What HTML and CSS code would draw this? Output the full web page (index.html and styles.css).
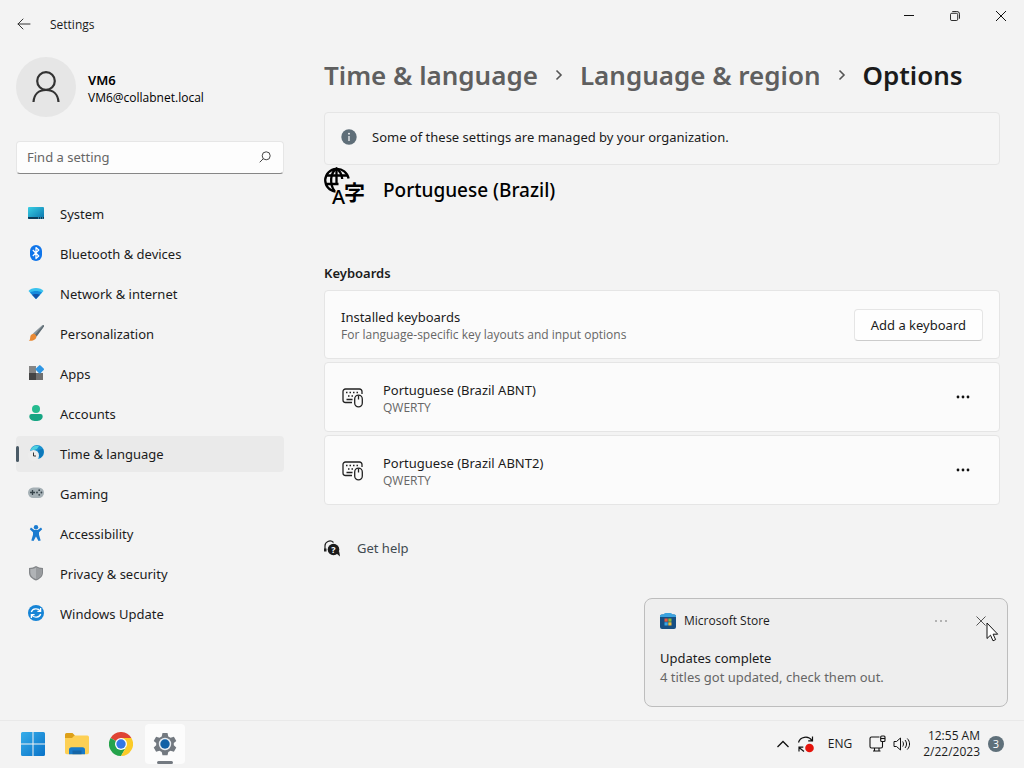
FILE: index.html
```
<!DOCTYPE html>
<html lang="en">
<head>
  <meta charset="UTF-8">
  <title>Settings</title>
  <link rel="stylesheet" href="styles.css">
</head>
<body>
  <header class="titlebar">
    <button class="back" aria-label="Back">
      <svg width="14" height="12" viewBox="0 0 14 12" fill="none" stroke="#333" stroke-linecap="round" stroke-linejoin="round"><path d="M13 6H1M6 1L1 6l5 5"/></svg>
    </button>
    <span class="title">Settings</span>
    <div class="window-buttons">
      <button aria-label="Minimize"><svg width="10" height="10" stroke="#111"><path d="M0 4.500h10"/></svg></button>
      <button aria-label="Restore"><svg width="10" height="10" viewBox="0 0 11 11" fill="none" stroke="#111"><rect x=".5" y="2.500" width="8" height="8" rx="1.500"/><path d="M2.500 .5h5a3 3 0 0 1 3 3v5"/></svg></button>
      <button aria-label="Close"><svg width="10" height="10" stroke="#111"><path d="M0 0l10 10M10 0L0 10"/></svg></button>
    </div>
  </header>

  <div class="layout">
    <aside class="sidebar">
      <div class="account">
        <div class="avatar">
          <svg width="28" height="32" viewBox="0 0 28 32" fill="none" stroke="#333" stroke-width="2.200"><circle cx="14" cy="10" r="8.800"/><path d="M1.500 31C2 23 7 19 14 19s12 4 12.500 12"/></svg>
        </div>
        <div class="account-text">
          <div class="account-name">VM6</div>
          <div class="account-mail">VM6@collabnet.local</div>
        </div>
      </div>

      <div class="search">
        <input type="text" placeholder="Find a setting" aria-label="Find a setting">
        <svg width="12" height="12" viewBox="0 0 12 12" fill="none" stroke="#444"><circle cx="7.200" cy="4.800" r="4"/><path d="M4.300 7.700L.7 11.300"/></svg>
      </div>

      <nav class="nav">
        <a href="#">
          <svg width="16" height="16" viewBox="0 0 16 16"><defs><linearGradient id="sys" x2="1" y2="1"><stop stop-color="#38cfe4"/><stop offset="1" stop-color="#0a72ac"/></linearGradient></defs><rect y="2" width="16" height="12" rx="1" fill="url(#sys)"/><path d="M0 12h16v1a1 1 0 0 1-1 1H1a1 1 0 0 1-1-1z" fill="#0b3b5a"/><path d="M10 13h1M12 13h1M14 13h1" stroke="#5fc6e6"/></svg>
          System
        </a>
        <a href="#">
          <svg width="16" height="16" viewBox="0 0 16 16"><rect x="2" width="12" height="16" rx="6" fill="#0f75ea"/><path d="M4.800 5l6 6L8 13.500v-11L10.800 5l-6 6" fill="none" stroke="#fff" stroke-width="1.200" stroke-linejoin="round"/></svg>
          Bluetooth &amp; devices
        </a>
        <a href="#">
          <svg width="16" height="16" viewBox="0 0 16 16"><path d="M.5 6C3 2 13 2 15.500 6L8 14z" fill="#39c2ee"/><path d="M2 7.500C5.500 5.500 10.500 5.500 14 7.500L8 14z" fill="#168bdc"/><path d="M4 9.800C6 8.600 10 8.600 12 9.800L8 14z" fill="#1353a8"/></svg>
          Network &amp; internet
        </a>
        <a href="#">
          <svg width="16" height="16" viewBox="0 0 16 16"><path d="M5 8.500L14.500 0c1-.3 1.700.5 1.400 1.400L8.500 11.500z" fill="#8a959c"/><path d="M8.500 11.500L15.900 1.400c.2-.7 0-1.100-.4-1.300L6.800 10z" fill="#5f6c74"/><path d="M4.500 9c2-1 4.500 1.200 3.800 3.400C7.500 15.200 4 16 .8 15.700c1.500-1 1.200-2 1.500-4C2.500 10.500 3.300 9.600 4.500 9z" fill="#e98a35"/></svg>
          Personalization
        </a>
        <a href="#">
          <svg width="16" height="16" viewBox="0 0 16 16"><rect x="1" y="1" width="7" height="7" fill="#858585"/><rect x="1" y="8" width="7" height="7" fill="#444"/><rect x="8" y="8" width="7" height="7" fill="#707070"/><rect x="8.600" y="1" width="6.500" height="6.500" rx="1" fill="#2e96e4" transform="rotate(45 11.800 4.200)"/></svg>
          Apps
        </a>
        <a href="#">
          <svg width="16" height="16" viewBox="0 0 16 16"><circle cx="8" cy="4" r="4" fill="#25bb8f"/><path d="M3.500 9h9A2.200 2.200 0 0 1 14.700 11.200C14.700 14.500 11.500 16 8 16s-6.700-1.500-6.700-4.800A2.200 2.200 0 0 1 3.500 9z" fill="#16a583"/></svg>
          Accounts
        </a>
        <a href="#" class="active" aria-current="page">
          <svg width="16" height="16" viewBox="0 0 16 16"><circle cx="9" cy="7" r="7" fill="#1991cf"/><path d="M2.500 5C4 1 8 0 11 1L9 4 6 5z" fill="#4fd0df"/><path d="M10 5l5-1c1.500 3 0 7-3 9.200L10 9z" fill="#0d78ba"/><circle cx="5.500" cy="10.500" r="5.500" fill="#ececec"/><path d="M5.500 7.500V11H8" fill="none" stroke="#333"/></svg>
          Time &amp; language
        </a>
        <a href="#">
          <svg width="16" height="16" viewBox="0 0 16 16"><rect y="2.500" width="16" height="10.500" rx="5.200" fill="#a5b0b5"/><path d="M2 7.500h5M4.500 5v5" stroke="#36434a" stroke-width="1.300"/><g fill="#36434a"><circle cx="9" cy="7.500" r=".9"/><circle cx="11.200" cy="5.200" r=".9"/><circle cx="11.200" cy="9.800" r=".9"/><circle cx="13.400" cy="7.500" r=".9"/></g></svg>
          Gaming
        </a>
        <a href="#">
          <svg width="16" height="16" viewBox="0 0 16 16" fill="#1a7bd0"><circle cx="8" cy="2.200" r="2.200"/><path d="M3 2.600L6.300 5h3.400L13 2.600l1.200 1.600L11 7.200v2.600l1.700 5.600-2.200.6L8 11.500 5.500 16l-2.200-.6L5 9.800V7.200L1.800 4.200z"/></svg>
          Accessibility
        </a>
        <a href="#">
          <svg width="16" height="16" viewBox="0 0 16 16"><path d="M8 1c2 1.300 4.300 2 7 2v4.500c0 4-3 6.500-7 8-4-1.500-7-4-7-8V3c2.700 0 5-.7 7-2z" fill="#838689"/><path d="M8 2.500c1.700 1 3.600 1.500 5.700 1.600v3.400c0 3.200-2.400 5.300-5.700 6.600-3.300-1.300-5.700-3.400-5.700-6.600V4.100C4.400 4 6.300 3.500 8 2.500z" fill="#b0b3b6"/><path d="M8 2.500c1.700 1 3.600 1.500 5.700 1.600v3.400c0 3.200-2.400 5.300-5.700 6.600z" fill="#989b9e"/></svg>
          Privacy &amp; security
        </a>
        <a href="#">
          <svg width="16" height="16" viewBox="0 0 16 16"><circle cx="8" cy="8" r="8" fill="#1684d6"/><path d="M3.300 7C4.500 3.300 10 2.700 12.300 6M12.700 9c-1.200 3.700-6.700 4.300-9 1M12.600 3v3.300H9.400M3.400 13V9.700h3.200" fill="none" stroke="#fff" stroke-width="1.300"/></svg>
          Windows Update
        </a>
      </nav>
    </aside>

    <main class="content">
      <h1 class="breadcrumb">
        <a href="#">Time &amp; language</a>
        <svg width="8" height="12" viewBox="0 0 8 12" fill="none" stroke="#555" stroke-width="1.600"><path d="M1.500 1.500L6 6l-4.500 4.500"/></svg>
        <a href="#">Language &amp; region</a>
        <svg width="8" height="12" viewBox="0 0 8 12" fill="none" stroke="#555" stroke-width="1.600"><path d="M1.500 1.500L6 6l-4.500 4.500"/></svg>
        <span>Options</span>
      </h1>

      <div class="banner">
        <svg width="16" height="16" viewBox="0 0 16 16"><circle cx="8" cy="8" r="7.700" fill="#5f6e78"/><path d="M8 7v5" stroke="#fff" stroke-width="1.200"/><circle cx="8" cy="4.700" r=".9" fill="#fff"/></svg>
        Some of these settings are managed by your organization.
      </div>

      <div class="language">
        <svg width="42" height="45" viewBox="0 -2 42 45">
          <g fill="none" stroke="#000" stroke-width="2.300"><path d="M11.500 24.500C5.500 24 1.200 19 1.200 13A11.800 11.800 0 0 1 24.600 11.500"/><path d="M10.500 24C5.500 17 6 6 12.500 1.500 16 4 18 7.500 18.200 12"/><path d="M2.500 8.500h21M2 17h12.500M12.500 1.500V17"/></g>
          <text class="glyph-latin" x="8" y="37">A</text>
          <text class="glyph-cjk" x="20" y="33">字</text>
        </svg>
        <h2>Portuguese (Brazil)</h2>
      </div>

      <section>
        <h3>Keyboards</h3>
        <div class="cards">
          <div class="card">
            <div class="card-text">
              <div class="card-title">Installed keyboards</div>
              <div class="card-note">For language-specific key layouts and input options</div>
            </div>
            <button class="add">Add a keyboard</button>
          </div>
          <div class="card">
            <svg class="card-icon" width="22" height="20" viewBox="0 0 22 20" fill="none" stroke="#222" stroke-width="1.300"><path d="M10 14.500H3.500A2.500 2.500 0 0 1 1 12V3.500A2.500 2.500 0 0 1 3.500 1h14A2.500 2.500 0 0 1 20 3.500V6"/><path d="M4 4.500h1.500M7.500 4.500H9M11 4.500h1.500M14.500 4.500H16M6 8h1.500M9.500 8H11M4.500 11.500h6"/><rect x="12.700" y="7.200" width="7.600" height="11.600" rx="3.800"/><path d="M16.500 7.500v4"/></svg>
            <div class="card-text">
              <div class="card-title">Portuguese (Brazil ABNT)</div>
              <div class="card-note">QWERTY</div>
            </div>
            <button class="more" aria-label="More options"><svg width="14" height="4" fill="#111"><circle cx="2" cy="2" r="1.400"/><circle cx="7" cy="2" r="1.400"/><circle cx="12" cy="2" r="1.400"/></svg></button>
          </div>
          <div class="card">
            <svg class="card-icon" width="22" height="20" viewBox="0 0 22 20" fill="none" stroke="#222" stroke-width="1.300"><path d="M10 14.500H3.500A2.500 2.500 0 0 1 1 12V3.500A2.500 2.500 0 0 1 3.500 1h14A2.500 2.500 0 0 1 20 3.500V6"/><path d="M4 4.500h1.500M7.500 4.500H9M11 4.500h1.500M14.500 4.500H16M6 8h1.500M9.500 8H11M4.500 11.500h6"/><rect x="12.700" y="7.200" width="7.600" height="11.600" rx="3.800"/><path d="M16.500 7.500v4"/></svg>
            <div class="card-text">
              <div class="card-title">Portuguese (Brazil ABNT2)</div>
              <div class="card-note">QWERTY</div>
            </div>
            <button class="more" aria-label="More options"><svg width="14" height="4" fill="#111"><circle cx="2" cy="2" r="1.400"/><circle cx="7" cy="2" r="1.400"/><circle cx="12" cy="2" r="1.400"/></svg></button>
          </div>
        </div>
      </section>

      <a href="#" class="help">
        <svg width="17" height="17" viewBox="0 0 17 17"><path d="M1 10.500V6.500A5 5 0 0 1 9.500 2.500" fill="none" stroke="#222" stroke-width="1.200"/><path d="M0 8.500h2.500v3H0z" fill="#222"/><circle cx="9.500" cy="9.500" r="5.800" fill="#1b1b1b"/><path d="M12 13l4 3.500-.8-5z" fill="#1b1b1b"/><text class="question" x="9.500" y="13">?</text></svg>
        Get help
      </a>
    </main>
  </div>

  <div class="toast" role="status">
    <div class="toast-head">
      <svg width="16" height="16" viewBox="0 0 16 16"><rect y="1.500" width="16" height="14.500" rx="2" fill="#164e82"/><path d="M3.500 1.500Q4 0 5.500 0h5Q12 0 12.500 1.500h2A1.500 1.500 0 0 1 16 3v1H0V3a1.500 1.500 0 0 1 1.500-1.500z" fill="#3ba3df"/><path d="M4.500 5.500h3.200v3.200H4.500z" fill="#e9583c"/><path d="M8.300 5.500h3.200v3.200H8.300z" fill="#8abb3b"/><path d="M4.500 9.300h3.200v3.200H4.500z" fill="#3aa5e3"/><path d="M8.300 9.300h3.200v3.200H8.300z" fill="#efbd39"/></svg>
      <span class="toast-app">Microsoft Store</span>
      <button aria-label="Notification settings"><svg width="12" height="4" fill="#666"><circle cx="1" cy="2" r=".8"/><circle cx="6" cy="2" r=".8"/><circle cx="11" cy="2" r=".8"/></svg></button>
      <button aria-label="Dismiss"><svg width="10" height="10" stroke="#555"><path d="M.5 .5l9 9M9.500 .5l-9 9"/></svg></button>
    </div>
    <div class="toast-title">Updates complete</div>
    <div class="toast-text">4 titles got updated, check them out.</div>
    <svg class="cursor" width="13" height="20" viewBox="0 0 13 20"><path d="M1 1v15.500l3.500-3.300 2.500 5.600 2.600-1.200-2.500-5.400h4.600z" fill="#fff" stroke="#111"/></svg>
  </div>

  <footer class="taskbar">
    <div class="apps">
      <button aria-label="Start">
        <svg width="24" height="24" viewBox="0 0 24 24"><defs><linearGradient id="win" x2="1" y2="1"><stop stop-color="#38aeea"/><stop offset="1" stop-color="#0872c8"/></linearGradient></defs><path d="M0 1.500A1.500 1.500 0 0 1 1.500 0H11.500v11.500H0zM12.500 0h10A1.500 1.500 0 0 1 24 1.500v10H12.500zM0 12.500h11.500V24h-10A1.500 1.500 0 0 1 0 22.500zM12.500 12.500H24v10a1.500 1.500 0 0 1-1.500 1.500h-10z" fill="url(#win)"/></svg>
      </button>
      <button aria-label="File Explorer">
        <svg width="26" height="24" viewBox="0 0 26 24"><path d="M1 2.500A1.500 1.500 0 0 1 2.500 1h6L11 3.500 8 7H1z" fill="#dda019"/><path d="M1 6h7l2.500-2.500h12.800A1.700 1.700 0 0 1 25 5.200v15.300a1.700 1.700 0 0 1-1.700 1.700H2.700A1.700 1.700 0 0 1 1 20.500z" fill="#fdd055"/><path d="M5 22.200v-4.500a2.500 2.500 0 0 1 2.500-2.500h11a2.500 2.500 0 0 1 2.500 2.500v4.500z" fill="#187bc9"/><path d="M8.500 18.500h9v3.700h-9z" fill="#1565a6"/></svg>
      </button>
      <button aria-label="Chrome">
        <svg width="24" height="24" viewBox="0 0 24 24"><path d="M12 12L1.600 6A12 12 0 0 1 22.400 6H12z" fill="#df4334"/><path d="M12 12L1.600 6A12 12 0 0 0 12 24l5.200-9z" fill="#25a34b"/><path d="M12 6h10.400A12 12 0 0 1 12 24l5.200-9z" fill="#fbcb28"/><circle cx="12" cy="12" r="6" fill="#fff"/><circle cx="12" cy="12" r="4.700" fill="#3478e5"/></svg>
      </button>
      <button class="running" aria-label="Settings">
        <svg width="24" height="24" viewBox="0 0 24 24"><path d="M9.500 1h5l.8 3.400 2.200 1.300 3.400-1 2.400 4.200L20.800 11v2.200l2.500 2.400-2.400 4.100-3.400-1-2.200 1.300-.8 3.200h-5l-.8-3.200-2.200-1.300-3.400 1-2.400-4.100 2.500-2.400V11L.7 8.900l2.400-4.200 3.400 1 2.200-1.300z" fill="#737980"/><circle cx="12" cy="12" r="6.200" fill="#e8edf2"/><circle cx="12" cy="12" r="4.700" fill="#1261a6"/></svg>
      </button>
    </div>

    <div class="tray">
      <button aria-label="Show hidden icons"><svg width="12" height="8" fill="none" stroke="#111" stroke-width="1.300"><path d="M.5 7L6 1.500 11.500 7"/></svg></button>
      <button aria-label="Updates"><svg width="18" height="18" viewBox="0 0 18 18" fill="none" stroke="#111" stroke-width="1.200"><path d="M1.500 7.500C3 2 11 0 15 5.500M15.500 1.500v4.300h-4.300M7 16.500L2 12.500M2 16.500v-4.300h4.300"/><circle cx="12.500" cy="13" r="4.300" fill="#e5130b" stroke="none"/></svg></button>
      <button class="language-switch">ENG</button>
      <button aria-label="Network and volume">
        <svg width="17" height="17" viewBox="0 0 17 17" fill="none" stroke="#111" stroke-width="1.100"><path d="M10.500 2H2.500A1.500 1.500 0 0 0 1 3.500v8A1.500 1.500 0 0 0 2.500 13h9.500a1.500 1.500 0 0 0 1.500-1.500V7M5.500 13v3M10 13v3M4 16h7.500"/><rect x="11.700" y="1" width="4.300" height="5.500" rx="1"/><path d="M11.700 3.500H16"/></svg>
        <svg width="18" height="14" viewBox="0 0 18 14" fill="none" stroke="#111"><path d="M1 4.500h2.500l4-3.500v12l-4-3.500H1z"/><path d="M9.700 4.500c1 1.500 1 3.500 0 5M12 3c2 2.500 2 5.500 0 8M14.300 1.500c3 3.300 3 7.700 0 11"/></svg>
      </button>
      <button class="clock">
        <span>12:55 AM</span>
        <span>2/22/2023</span>
      </button>
      <button class="badge" aria-label="3 notifications">3</button>
    </div>
  </footer>
</body>
</html>
```
FILE: styles.css
```
* { box-sizing: border-box; }
body { margin: 0; min-height: 100vh; display: flex; flex-direction: column; background: #f3f3f3; color: #1b1b1b; font-family: "Noto Sans", "Open Sans", "Noto Sans CJK JP", sans-serif; font-size: 13px; line-height: 20px; }
button { display: flex; align-items: center; justify-content: center; padding: 0; border: none; background: none; color: inherit; font: inherit; }
a { color: inherit; text-decoration: none; }
h1, h2, h3 { margin: 0; font-weight: 600; }
svg { display: block; flex: none; }

/* small text */
.title, .account-mail, .card-note, .toast-app, .tray { font-family: "Open Sans", "Noto Sans", sans-serif; font-size: 12px; }

/* title bar */
.titlebar { display: flex; align-items: center; height: 48px; padding-left: 8px; }
.back { width: 32px; height: 32px; }
.title { flex: 1; padding: 2px 0 0 10px; }
.window-buttons { display: flex; align-self: flex-start; }
.window-buttons button { width: 46px; height: 32px; }

.layout { flex: 1; display: flex; gap: 40px; padding: 0 24px 0 16px; }

/* sidebar */
.sidebar { flex: 0 0 268px; padding-top: 9px; }
.account { display: flex; align-items: center; gap: 12px; }
.avatar { display: flex; align-items: center; justify-content: center; width: 60px; height: 60px; border-radius: 50%; background: #e6e6e6; }
.account-text { padding-top: 4px; }
.account-name { font-weight: 600; line-height: 18px; color: #000; }
.account-mail { line-height: 18px; color: #000; }
.search { display: flex; align-items: center; height: 33px; margin-top: 24px; padding: 0 12px 2px 10px; border: 1px solid #e6e6e6; border-bottom-color: #868686; border-radius: 4px; background: #fdfdfd; }
.search input { flex: 1; min-width: 0; padding: 0; border: none; outline: none; background: none; font: inherit; color: #1b1b1b; }
.search input::placeholder { color: #666; opacity: 1; }
.nav { display: flex; flex-direction: column; gap: 4px; margin-top: 22px; }
.nav a { display: flex; align-items: center; gap: 16px; height: 36px; padding-left: 12px; border-radius: 4px; }
.nav svg { margin-bottom: 2px; }
.nav .active { padding-left: 9px; background: #eaeaea; }
.nav .active::before { content: ""; width: 3px; height: 16px; margin: 0 -7px 0 -9px; border-radius: 2px; background: #4a5a66; }

/* content */
.content { flex: 1; min-width: 0; }
.breadcrumb { display: flex; align-items: center; gap: 17px; height: 40px; margin-top: 7px; font-size: 26px; line-height: 40px; white-space: nowrap; }
.breadcrumb a { color: #5f5f5f; }
.banner { display: flex; align-items: center; gap: 15px; height: 53px; margin-top: 17px; padding: 0 16px 3px; border: 1px solid #e5e5e5; border-radius: 4px; background: #f5f5f5; }
.language { display: flex; align-items: center; gap: 17px; height: 45px; }
.language h2 { padding-top: 4px; font-size: 19px; font-weight: 500; line-height: 28px; color: #000; }
.glyph-latin { font-size: 20px; font-weight: 500; }
.glyph-cjk { font-family: "Noto Sans CJK JP", sans-serif; font-size: 21px; font-weight: 700; }
h3 { margin: 53px 0 7px; font-size: 13px; line-height: 20px; }
.cards { display: flex; flex-direction: column; gap: 3px; }
.card { display: flex; align-items: center; height: 70px; padding: 0 16px; border: 1px solid #e5e5e5; border-radius: 4px; background: #fbfbfb; }
.card:first-child { height: 69px; }
.card-icon { margin: 1px 19px 0 1px; }
.card-text { flex: 1; padding-top: 2px; }
.card-title { line-height: 18px; }
.card-note { line-height: 17px; color: #666; }
.add { height: 32px; padding: 0 16px; border: 1px solid #e5e5e5; border-bottom-color: #ccc; border-radius: 4px; background: #fefefe; }
.more { width: 40px; height: 32px; }
.help { display: flex; align-items: center; gap: 16px; width: fit-content; margin-top: 33px; color: #3f4a50; }
.question { fill: #fff; font-size: 9px; font-weight: 700; text-anchor: middle; }

/* notification */
.toast { position: absolute; right: 16px; bottom: 61px; width: 364px; height: 109px; padding: 6px 10px 0 15px; border: 1px solid #bdbdbd; border-radius: 8px; background: #eee; }
.toast-head { display: flex; align-items: center; height: 32px; margin-bottom: 12px; }
.toast-head button { width: 32px; height: 32px; }
.toast-head button + button { margin-left: 8px; }
.toast-app { flex: 1; padding-left: 8px; }
.toast-title { line-height: 19px; }
.toast-text { line-height: 19px; color: #666; }
.cursor { position: absolute; right: 8px; top: 23px; }

/* taskbar */
.taskbar { display: flex; align-items: center; justify-content: space-between; height: 48px; padding: 0 20px 2px 13px; border-top: 1px solid #e9e9e9; background: #f3f3f3; }
.apps { display: flex; gap: 4px; }
.apps button { width: 40px; height: 40px; }
.apps .running { flex-direction: column; justify-content: flex-end; gap: 5px; border-radius: 4px; background: #fcfcfc; }
.running::after { content: ""; width: 16px; height: 3px; border-radius: 2px; background: #737980; }
.tray { display: flex; align-items: center; gap: 8px; }
.tray .language-switch { margin: 0 9px 0 5px; }
.tray button { gap: 7px; }
.tray .clock { flex-direction: column; align-items: flex-end; gap: 0; margin-left: 4px; line-height: 16px; }
.tray .badge { width: 16px; height: 16px; border-radius: 50%; background: #5f707a; color: #fff; font-size: 11px; line-height: 16px; }
```
